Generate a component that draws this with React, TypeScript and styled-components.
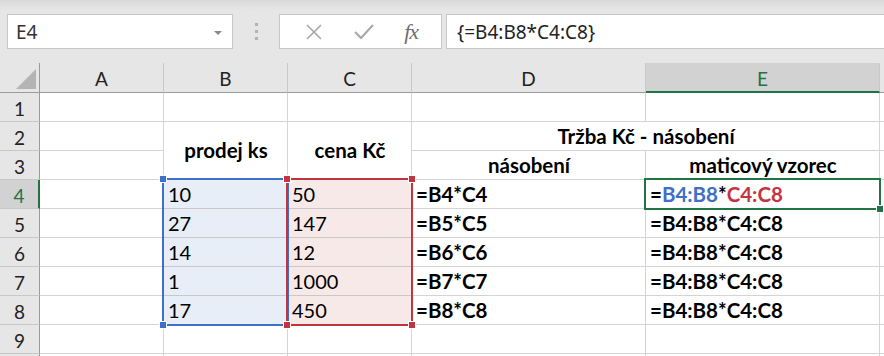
import React from 'react';
import styled, { createGlobalStyle } from 'styled-components';

const GlobalStyle = createGlobalStyle`
  html, body {
    margin: 0;
    padding: 0;
    background: #e6e6e6;
    overflow: hidden;
  }
`;

const Page = styled.div`
  width: 884px;
  height: 356px;
  overflow: hidden;
  font-family: Lato, "Liberation Sans", sans-serif;
  background: #e6e6e6;
`;

const FormulaBar = styled.div`
  display: flex;
  align-items: stretch;
  height: 63px;
  padding: 14px 0 0 7px;
  box-sizing: border-box;
  background: linear-gradient(#d9d9d9 0, #e6e6e6 10px);
  & > * {
    height: 35px;
  }
`;

const Box = styled.div`
  background: #ffffff;
  border: 1px solid #c6c6c6;
  box-sizing: border-box;
  display: flex;
  align-items: center;
`;

const NameBox = styled(Box)`
  width: 226px;
  padding: 0 10px 0 8px;
  justify-content: space-between;
  font-family: "Noto Sans", "Open Sans", sans-serif;
  font-size: 19px;
  color: #333;
`;

const DropArrow = styled.span`
  width: 0;
  height: 0;
  border-left: 4px solid transparent;
  border-right: 4px solid transparent;
  border-top: 4px solid #8a8a8a;
  margin-top: 2px;
`;

const Grip = styled.div`
  width: 46px;
  display: flex;
  flex-direction: column;
  align-items: center;
  justify-content: center;
  gap: 4px;
  & span {
    width: 3px;
    height: 3px;
    background: #b2b2b2;
  }
`;

const FxButtons = styled(Box)`
  width: 163px;
  justify-content: space-around;
  padding: 0 8px 0 10px;
  margin-right: 4px;
`;

const Fx = styled.span`
  font-family: "Liberation Serif", "DejaVu Serif", serif;
  font-style: italic;
  font-size: 22px;
  color: #6e6e6e;
  letter-spacing: -1px;
`;

const FormulaInput = styled(Box)`
  flex: 1;
  border-right: none;
  padding-left: 10px;
  font-family: "Noto Sans", "Open Sans", sans-serif;
  font-size: 19px;
  color: #222;
`;

const Sheet = styled.div`
  display: grid;
  grid-template-columns: 40px 124px 124px 124px 234px 234px 1fr;
  grid-template-rows: 30px repeat(10, 29px);
  background: #ffffff;
`;

const Corner = styled.div`
  grid-row: 1;
  grid-column: 1;
  position: relative;
  background: #e6e6e6;
  border-right: 1px solid #9b9b9b;
  border-bottom: 1px solid #9b9b9b;
  &::after {
    content: '';
    position: absolute;
    right: 3px;
    bottom: 3px;
    width: 0;
    height: 0;
    border-left: 20px solid transparent;
    border-bottom: 20px solid #b4b4b4;
  }
`;

const ColHead = styled.div<{ $col: number; $active?: boolean }>`
  grid-row: 1;
  grid-column: ${(p) => p.$col};
  display: flex;
  align-items: center;
  justify-content: center;
  padding-top: 2px;
  box-sizing: border-box;
  background: ${(p) => (p.$active ? '#d2d2d2' : '#e6e6e6')};
  color: ${(p) => (p.$active ? '#217346' : '#222')};
  border-right: 1px solid #c8c8c8;
  border-bottom: ${(p) => (p.$active ? '2px solid #217346' : '1px solid #9b9b9b')};
  font-size: 19px;
`;

const RowHead = styled.div<{ $row: number; $active?: boolean }>`
  grid-column: 1;
  grid-row: ${(p) => p.$row};
  display: flex;
  align-items: center;
  justify-content: center;
  padding-top: 2px;
  box-sizing: border-box;
  background: ${(p) => (p.$active ? '#d2d2d2' : '#e6e6e6')};
  color: ${(p) => (p.$active ? '#217346' : '#222')};
  border-right: ${(p) => (p.$active ? '2px solid #217346' : '1px solid #9b9b9b')};
  border-bottom: 1px solid #c8c8c8;
  font-size: 19px;
`;

type Tint = 'blue' | 'red' | undefined;

const tintBg = (t: Tint) => (t === 'blue' ? '#e8eef8' : t === 'red' ? '#f8e9e9' : '#ffffff');

const Cell = styled.div<{
  $row: number;
  $col: number;
  $rowSpan?: number;
  $colSpan?: number;
  $center?: boolean;
  $bold?: boolean;
  $tint?: Tint;
}>`
  grid-row: ${(p) => p.$row} / span ${(p) => p.$rowSpan ?? 1};
  grid-column: ${(p) => p.$col} / span ${(p) => p.$colSpan ?? 1};
  display: flex;
  align-items: ${(p) => (p.$rowSpan && p.$rowSpan > 1 ? 'center' : 'flex-end')};
  justify-content: ${(p) => (p.$center ? 'center' : 'flex-start')};
  padding: 0 3px 2px 4px;
  box-sizing: border-box;
  border-right: 1px solid #d4d4d4;
  border-bottom: 1px solid ${(p) => (p.$tint ? '#c9c9c9' : '#d4d4d4')};
  background: ${(p) => tintBg(p.$tint)};
  font-size: ${(p) => (p.$bold ? '20.5px' : '20px')};
  line-height: 24px;
  font-weight: ${(p) => (p.$bold ? 700 : 400)};
  color: #000;
  white-space: nowrap;
`;

const RangeBox = styled.div<{ $col: number; $color: string }>`
  grid-column: ${(p) => p.$col};
  grid-row: 5 / span 5;
  margin: -2px -1px -1px -2px;
  border: 2px solid ${(p) => p.$color};
  position: relative;
  pointer-events: none;
  z-index: 2;
`;

const Handle = styled.span<{ $color: string; $top?: boolean; $left?: boolean }>`
  position: absolute;
  width: 6px;
  height: 6px;
  background: ${(p) => p.$color};
  border: 1px solid #fff;
  ${(p) => (p.$top ? 'top: -5px;' : 'bottom: -5px;')}
  ${(p) => (p.$left ? 'left: -5px;' : 'right: -5px;')}
`;

const ActiveBox = styled.div`
  grid-column: 6;
  grid-row: 5;
  margin: -2px -1px -1px -2px;
  border: 2px solid #217346;
  position: relative;
  pointer-events: none;
  z-index: 3;
`;

const FillHandle = styled.span`
  position: absolute;
  right: -5px;
  bottom: -5px;
  width: 6px;
  height: 6px;
  background: #217346;
  border: 1px solid #fff;
`;

const Ref = styled.span<{ $color: string }>`
  color: ${(p) => p.$color};
`;

const BLUE = '#3f6fc6';
const RED = '#c4343f';

const columns = ['A', 'B', 'C', 'D', 'E'];
const prodej = ['10', '27', '14', '1', '17'];
const cena = ['50', '147', '12', '1000', '450'];

export default function App() {
  const rows = Array.from({ length: 10 }, (_, i) => i + 1);
  return (
    <Page>
      <GlobalStyle />
      <FormulaBar>
        <NameBox>
          <span>E4</span>
          <DropArrow />
        </NameBox>
        <Grip>
          <span />
          <span />
          <span />
        </Grip>
        <FxButtons>
          <svg width="18" height="18" viewBox="0 0 18 18">
            <path d="M2 2 L16 16 M16 2 L2 16" stroke="#a6a6a6" strokeWidth="1.6" fill="none" />
          </svg>
          <svg width="22" height="18" viewBox="0 0 22 18">
            <path d="M2 9 L8 15 L20 2" stroke="#a6a6a6" strokeWidth="2" fill="none" />
          </svg>
          <Fx>fx</Fx>
        </FxButtons>
        <FormulaInput>{'{=B4:B8*C4:C8}'}</FormulaInput>
      </FormulaBar>

      <Sheet>
        <Corner />
        {columns.map((c, i) => (
          <ColHead key={c} $col={i + 2} $active={c === 'E'}>
            {c}
          </ColHead>
        ))}
        <ColHead $col={7} />

        {rows.map((r) => (
          <RowHead key={r} $row={r + 1} $active={r === 4}>
            {r < 10 ? r : ''}
          </RowHead>
        ))}

        {/* empty column A and the strip right of E */}
        {rows.map((r) => (
          <React.Fragment key={'e' + r}>
            <Cell $row={r + 1} $col={2} />
            <Cell $row={r + 1} $col={7} />
          </React.Fragment>
        ))}
        <Cell $row={2} $col={3} />
        <Cell $row={2} $col={4} />
        <Cell $row={2} $col={5} />
        <Cell $row={2} $col={6} />

        <Cell $row={3} $col={3} $rowSpan={2} $center $bold>
          prodej ks
        </Cell>
        <Cell $row={3} $col={4} $rowSpan={2} $center $bold>
          cena Kč
        </Cell>
        <Cell $row={3} $col={5} $colSpan={2} $center $bold>
          Tržba Kč - násobení
        </Cell>
        <Cell $row={4} $col={5} $center $bold>
          násobení
        </Cell>
        <Cell $row={4} $col={6} $center $bold>
          maticový vzorec
        </Cell>

        {prodej.map((v, i) => (
          <React.Fragment key={'r' + i}>
            <Cell $row={i + 5} $col={3} $tint="blue">
              {v}
            </Cell>
            <Cell $row={i + 5} $col={4} $tint="red">
              {cena[i]}
            </Cell>
            <Cell $row={i + 5} $col={5} $bold>
              ={`B${i + 4}*C${i + 4}`}
            </Cell>
            <Cell $row={i + 5} $col={6} $bold>
              {i === 0 ? (
                <>
                  =<Ref $color={BLUE}>B4:B8</Ref>*<Ref $color={RED}>C4:C8</Ref>
                </>
              ) : (
                '=B4:B8*C4:C8'
              )}
            </Cell>
          </React.Fragment>
        ))}

        {[3, 4, 5, 6].map((c) => (
          <React.Fragment key={'b' + c}>
            <Cell $row={10} $col={c} />
            <Cell $row={11} $col={c} />
          </React.Fragment>
        ))}

        <RangeBox $col={3} $color={BLUE}>
          <Handle $color={BLUE} $top $left />
          <Handle $color={BLUE} $left />
          <Handle $color={RED} $top />
        </RangeBox>
        <RangeBox $col={4} $color={RED}>
          <Handle $color={RED} $top $left />
          <Handle $color={RED} $left />
          <Handle $color={RED} $top />
          <Handle $color={RED} />
        </RangeBox>
        <ActiveBox>
          <FillHandle />
        </ActiveBox>
      </Sheet>
    </Page>
  );
}
